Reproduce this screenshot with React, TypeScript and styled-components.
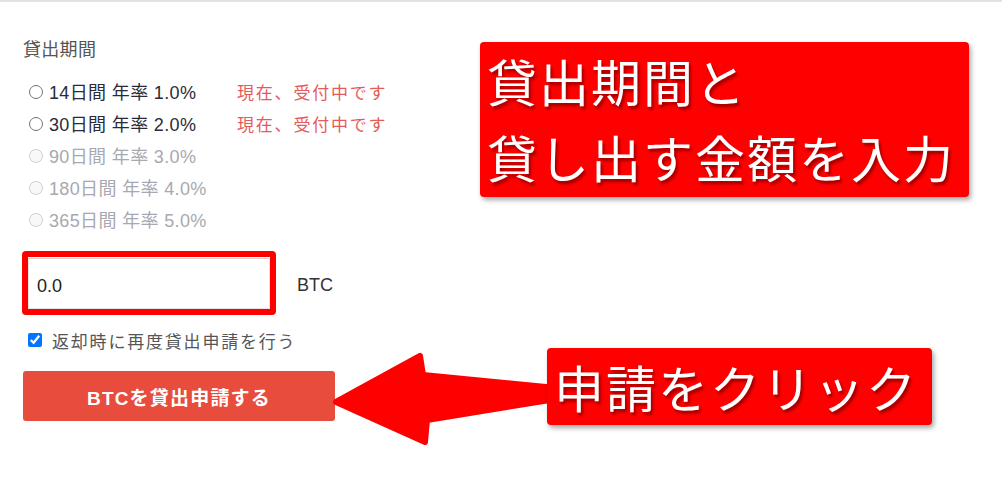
import styled, { createGlobalStyle } from "styled-components";

const GlobalStyle = createGlobalStyle`
  html, body {
    margin: 0;
    padding: 0;
    background: #fff;
  }
  body {
    font-family: "Liberation Sans", "Noto Sans CJK JP", sans-serif;
  }
`;

interface Term {
  days: number,
  rate: string,
  open: boolean,
}

const terms: Term[] = [
  { days: 14, rate: "1.0", open: true },
  { days: 30, rate: "2.0", open: true },
  { days: 90, rate: "3.0", open: false },
  { days: 180, rate: "4.0", open: false },
  { days: 365, rate: "5.0", open: false },
];

export default function App() {
  return (
    <Page>
      <GlobalStyle />
      <Form>
        <Title>貸出期間</Title>
        <TermList>
          {terms.map((t) => (
            <TermRow key={t.days}>
              <TermLabel $disabled={!t.open}>
                <Radio type="radio" name="term" disabled={!t.open} />
                {t.days}日間 年率 {t.rate}%
              </TermLabel>
              {t.open && <Status>現在、受付中です</Status>}
            </TermRow>
          ))}
        </TermList>
        <AmountRow>
          <Highlight>
            <AmountInput type="text" defaultValue="0.0" />
          </Highlight>
          <Unit>BTC</Unit>
        </AmountRow>
        <CheckRow>
          <Check type="checkbox" defaultChecked />
          返却時に再度貸出申請を行う
        </CheckRow>
        <Submit type="button">BTCを貸出申請する</Submit>
      </Form>

      <Arrow viewBox="0 0 240 120" width="240" height="120">
        <polygon
          points="16,62 100,16 103,35 236,48 236,59 107,80 105,102"
          fill="#ff0000"
          stroke="#ff0000"
          strokeWidth="6"
          strokeLinejoin="round"
        />
      </Arrow>

      <Callout $left={480} $top={42} $width={489} $height={155}>
        貸出期間と<br />貸し出す金額を入力
      </Callout>
      <Callout $left={547} $top={348} $width={385} $height={77}>
        申請をクリック
      </Callout>
    </Page>
  );
}

const Page = styled.div`
  position: relative;
  width: 1002px;
  height: 490px;
  border-top: 2px solid #e2e2e2;
  box-sizing: border-box;
  overflow: hidden;
`;

const Form = styled.div`
  display: flex;
  flex-direction: column;
  align-items: flex-start;
  padding: 36px 0 0 23px;
`;

const Title = styled.div`
  font-size: 18px;
  line-height: 24px;
  color: #555;
  letter-spacing: 0.3px;
`;

const TermList = styled.div`
  display: flex;
  flex-direction: column;
  margin-top: 13px;
`;

const TermRow = styled.div`
  display: flex;
  align-items: center;
  height: 32px;
`;

const TermLabel = styled.label<{ $disabled: boolean }>`
  display: flex;
  align-items: center;
  width: 214px;
  font-size: 18px;
  letter-spacing: 0.35px;
  color: ${(p) => (p.$disabled ? "#a8a8b0" : "#2b2b38")};
`;

const Radio = styled.input`
  width: 14px;
  height: 14px;
  margin: 2px 6px 0 6px;
`;

const Status = styled.span`
  font-size: 17px;
  letter-spacing: 1.8px;
  color: #e65a5a;
`;

const AmountRow = styled.div`
  display: flex;
  align-items: center;
  margin-top: 16px;
  margin-left: -1px;
`;

const Highlight = styled.div`
  width: 254px;
  height: 64px;
  box-sizing: border-box;
  border: 6px solid #ff0000;
  border-radius: 4px;
  display: flex;
`;

const AmountInput = styled.input`
  flex: 1;
  min-width: 0;
  border: 1px solid #e4e4e4;
  border-top-color: #d0d0d0;
  padding: 5px 8px 0;
  margin: 1px 0 0 0;
  font-family: "Liberation Sans", sans-serif;
  font-size: 18px;
  color: #222;
  outline: none;
`;

const Unit = styled.span`
  margin-left: 21px;
  padding-top: 5px;
  font-size: 18px;
  color: #333;
`;

const CheckRow = styled.label`
  display: flex;
  align-items: center;
  height: 24px;
  margin-top: 13px;
  font-size: 17px;
  letter-spacing: 1.8px;
  color: #555;
`;

const Check = styled.input`
  width: 14px;
  height: 14px;
  margin: 0 10px 0 5px;
`;

const Submit = styled.button`
  margin-top: 19px;
  width: 312px;
  height: 50px;
  border: none;
  border-radius: 3px;
  background: #e74c3c;
  color: #fff;
  font-family: "Liberation Sans", "Noto Sans CJK JP", sans-serif;
  font-size: 19px;
  font-weight: 700;
  letter-spacing: 1.2px;
`;

const Arrow = styled.svg`
  position: absolute;
  left: 320px;
  top: 338px;
`;

const Callout = styled.div<{ $left: number, $top: number, $width: number, $height: number }>`
  position: absolute;
  left: ${(p) => p.$left}px;
  top: ${(p) => p.$top - 2}px;
  width: ${(p) => p.$width}px;
  height: ${(p) => p.$height}px;
  box-sizing: border-box;
  padding: 0 0 0 7px;
  background: #ff0000;
  border-radius: 4px;
  box-shadow: 2px 3px 5px rgba(0, 0, 0, 0.35);
  font-family: "Noto Sans CJK JP", sans-serif;
  font-size: 50px;
  letter-spacing: 2px;
  line-height: 76px;
  color: #fff;
  text-shadow: 2px 3px 3px rgba(90, 0, 0, 0.6);
  white-space: nowrap;
`;
